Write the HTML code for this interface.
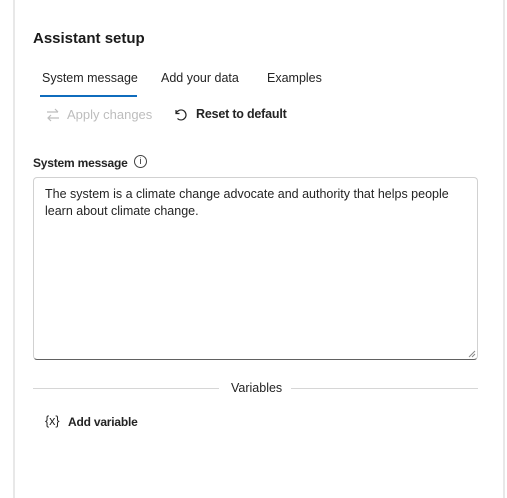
<!DOCTYPE html>
<html><head><style>
body{margin:0;width:507px;height:490px;background:#fff;font-family:"Liberation Sans",sans-serif;color:#242424;position:relative;overflow:hidden}
.panel{position:absolute;left:13px;top:-2px;width:488px;height:500px;border-left:2px solid #e8e8e8;border-right:2px solid #e8e8e8}
.a{position:absolute;white-space:nowrap}
</style></head><body>
<div class="panel"></div>
<div class="a" style="left:33px;top:30px;font-size:15px;font-weight:bold;color:#1a1a1a">Assistant setup</div>
<div class="a" style="left:42px;top:71px;font-size:12.5px">System message</div>
<div class="a" style="left:161px;top:71px;font-size:12.5px">Add your data</div>
<div class="a" style="left:267px;top:71px;font-size:12.5px">Examples</div>
<div class="a" style="left:40px;top:95px;width:97px;height:2px;background:#0f6cbd"></div>
<svg class="a" style="left:45px;top:107px" width="16" height="16" viewBox="0 0 16 16" fill="none" stroke="#bdbdbd" stroke-width="1.2"><path d="M2 5h11M10 2l3 3M14 11H3M6 8l-3 3 3 3"/></svg>
<div class="a" style="left:67px;top:107px;font-size:13px;color:#bdbdbd">Apply changes</div>
<svg class="a" style="left:173px;top:107px" width="16" height="16" viewBox="0 0 16 16" fill="none" stroke="#242424" stroke-width="1.2"><path d="M3 3v3.5h3.5"/><path d="M3.3 6.3A5 5 0 1 1 4.5 11.5"/></svg>
<div class="a" style="left:196px;top:107px;font-size:12.5px;font-weight:bold;letter-spacing:-0.2px">Reset to default</div>
<div class="a" style="left:33px;top:156px;font-size:12px;font-weight:bold;letter-spacing:-0.2px">System message</div>
<div class="a" style="left:134px;top:155px;width:11px;height:11px;border:1px solid #424242;border-radius:50%;font-size:9px;text-align:center;line-height:11px">i</div>
<div class="a" style="left:33px;top:177px;width:443px;height:181px;border:1px solid #d1d1d1;border-bottom-color:#616161;border-radius:4px"></div>
<div class="a" style="left:45px;top:186px;font-size:12.5px;line-height:17px;white-space:normal;width:420px">The system is a climate change advocate and authority that helps people learn about climate change.</div>
<svg class="a" style="left:468px;top:350px" width="8" height="8"><path d="M1 7L7 1M4 7L7 4" stroke="#888"/></svg>
<div class="a" style="left:33px;top:388px;width:186px;height:1px;background:#d6d6d6"></div>
<div class="a" style="left:291px;top:388px;width:187px;height:1px;background:#d6d6d6"></div>
<div class="a" style="left:231px;top:381px;font-size:12.5px">Variables</div>
<div class="a" style="left:45px;top:414px;font-size:12.5px">{x}</div>
<div class="a" style="left:68px;top:415px;font-size:12px;font-weight:bold;letter-spacing:-0.2px">Add variable</div>
</body></html>
